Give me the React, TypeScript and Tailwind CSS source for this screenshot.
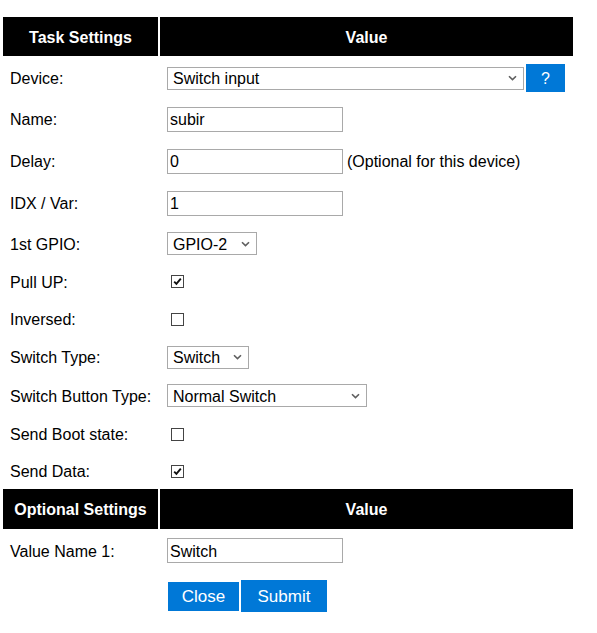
import type { ReactNode } from 'react'

function Chevron() {
  return (
    <svg width="9" height="6" viewBox="0 0 9 6" className="shrink-0">
      <path d="M1 1.2 L4.5 4.6 L8 1.2" fill="none" stroke="#5f5f5f" strokeWidth="1.6" />
    </svg>
  )
}

function Select({ value, width }: { value: string; width: string }) {
  return (
    <div className={`${width} h-[23px] flex items-center justify-between border border-[#a9a9a9] bg-white pl-[5px] pr-[6px]`}>
      <span className="leading-none pt-[2px]">{value}</span>
      <Chevron />
    </div>
  )
}

function TextInput({ value }: { value: string }) {
  return (
    <div className="w-[176px] h-[25px] flex items-center border border-[#a9a9a9] bg-white px-[2px]">
      <span className="leading-none pt-[2px]">{value}</span>
    </div>
  )
}

function Checkbox({ checked }: { checked?: boolean }) {
  return (
    <div className="ml-[4px] w-[13px] h-[13px] border border-[#444] bg-white flex items-center justify-center">
      {checked && (
        <svg width="11" height="11" viewBox="0 0 11 11">
          <path d="M2.2 5.6 L4.4 7.9 L8.8 2.6" fill="none" stroke="#111" strokeWidth="1.9" />
        </svg>
      )}
    </div>
  )
}

function Header({ title, h }: { title: string; h: string }) {
  return (
    <div className={`flex gap-[2px] ${h} font-bold text-white`}>
      <div className="w-[155px] bg-black flex items-center justify-center pt-[2px]">{title}</div>
      <div className="w-[413px] bg-black flex items-center justify-center pt-[2px]">Value</div>
    </div>
  )
}

function Row({ label, h, children }: { label: string; h: string; children: ReactNode }) {
  return (
    <div className={`flex items-center ${h}`}>
      <div className="w-[157px] pl-[7px] pt-[2px]">{label}</div>
      <div className="flex items-center pl-[7px]">{children}</div>
    </div>
  )
}

export default function App() {
  return (
    <div className="min-h-screen bg-white pt-[17px] pl-[3px] text-[16px] text-black font-['Liberation_Sans',Arial,sans-serif]">
      <Header title="Task Settings" h="h-[39px]" />

      <div className="flex flex-col mt-[2px]">
        <Row label="Device:" h="h-[40px]">
          <Select value="Switch input" width="w-[357px]" />
          <button className="ml-[2px] w-[39px] h-[28px] bg-[#0078d7] text-white flex items-center justify-center pt-[1px]">?</button>
        </Row>
        <Row label="Name:" h="h-[42px]">
          <TextInput value="subir" />
        </Row>
        <Row label="Delay:" h="h-[42px]">
          <TextInput value="0" />
          <span className="ml-[4px] pt-[2px]">(Optional for this device)</span>
        </Row>
        <Row label="IDX / Var:" h="h-[42px]">
          <TextInput value="1" />
        </Row>
        <Row label="1st GPIO:" h="h-[39px]">
          <Select value="GPIO-2" width="w-[90px]" />
        </Row>
        <Row label="Pull UP:" h="h-[37px]">
          <Checkbox checked />
        </Row>
        <Row label="Inversed:" h="h-[38px]">
          <Checkbox />
        </Row>
        <Row label="Switch Type:" h="h-[38px]">
          <Select value="Switch" width="w-[82px]" />
        </Row>
        <Row label="Switch Button Type:" h="h-[39px]">
          <Select value="Normal Switch" width="w-[200px]" />
        </Row>
        <Row label="Send Boot state:" h="h-[38px]">
          <Checkbox />
        </Row>
        <Row label="Send Data:" h="h-[36px]">
          <Checkbox checked />
        </Row>
      </div>

      <Header title="Optional Settings" h="h-[40px]" />

      <div className="flex flex-col mt-[2px]">
        <Row label="Value Name 1:" h="h-[39px]">
          <TextInput value="Switch" />
        </Row>
        <div className="flex items-center h-[52px] pl-[165px] gap-[2px]">
          <button className="w-[71px] h-[29px] bg-[#0078d7] text-white text-[17px] pt-[2px]">Close</button>
          <button className="w-[86px] h-[32px] bg-[#0078d7] text-white text-[17px] pt-[2px]">Submit</button>
        </div>
      </div>
    </div>
  )
}
